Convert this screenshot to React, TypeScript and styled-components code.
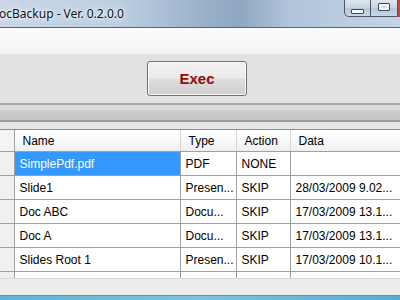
import styled, { createGlobalStyle } from 'styled-components';

const GlobalStyle = createGlobalStyle`
  html, body {
    margin: 0;
    padding: 0;
    background: #ffffff;
  }
`;

type Row = {
  name: string;
  type: string;
  action: string;
  data: string;
  selected?: boolean;
};

const rows: Row[] = [
  { name: 'SimplePdf.pdf', type: 'PDF', action: 'NONE', data: '', selected: true },
  { name: 'Slide1', type: 'Presen...', action: 'SKIP', data: '28/03/2009 9.02...' },
  { name: 'Doc ABC', type: 'Docu...', action: 'SKIP', data: '17/03/2009 13.1...' },
  { name: 'Doc A', type: 'Docu...', action: 'SKIP', data: '17/03/2009 13.1...' },
  { name: 'Slides Root 1', type: 'Presen...', action: 'SKIP', data: '17/03/2009 10.1...' },
  { name: '', type: '', action: '', data: '' },
];

const App = () => {
  return (
    <Window>
      <GlobalStyle />
      <TitleBar>
        <Title>ocBackup - Ver. 0.2.0.0</Title>
        <Controls>
          <CtrlButton>
            <MinGlyph />
          </CtrlButton>
          <CtrlButton>
            <MaxGlyph />
          </CtrlButton>
          <CloseEdge />
        </Controls>
      </TitleBar>
      <TopStrip />
      <ButtonPanel>
        <ExecButton>Exec</ExecButton>
      </ButtonPanel>
      <Splitter>
        <SplitBand $tone="light" />
        <SplitBand $tone="dark" />
        <SplitBand $tone="edge" />
      </Splitter>
      <GridArea>
        <Table>
          <colgroup>
            <col style={{ width: 14 }} />
            <col style={{ width: 166 }} />
            <col style={{ width: 56 }} />
            <col style={{ width: 54 }} />
            <col style={{ width: 120 }} />
          </colgroup>
          <thead>
            <tr>
              <HeadCell />
              <HeadCell>Name</HeadCell>
              <HeadCell>Type</HeadCell>
              <HeadCell>Action</HeadCell>
              <HeadCell>Data</HeadCell>
            </tr>
          </thead>
          <tbody>
            {rows.map((r, i) => (
              <tr key={i}>
                <RowHead />
                <Cell $selected={r.selected}>{r.name}</Cell>
                <Cell>{r.type}</Cell>
                <Cell>{r.action}</Cell>
                <Cell>{r.data}</Cell>
              </tr>
            ))}
          </tbody>
        </Table>
      </GridArea>
      <Footer />
      <BottomFrame />
    </Window>
  );
};

export default App;

const Window = styled.div`
  width: 400px;
  height: 300px;
  display: flex;
  flex-direction: column;
  overflow: hidden;
  font-family: 'Liberation Sans', Arial, sans-serif;
`;

const TitleBar = styled.div`
  height: 28px;
  flex-shrink: 0;
  display: flex;
  align-items: flex-start;
  justify-content: space-between;
  background: linear-gradient(
    90deg,
    #c9d7e6 0%,
    #bccfe2 30%,
    #98afc8 52%,
    #8ea7c1 60%,
    #b1c4da 72%,
    #c4d4e6 100%
  );
  border-bottom: 1px solid #56657a;
  box-sizing: border-box;
`;

const Title = styled.div`
  margin-left: -1px;
  margin-top: 5px;
  font-family: 'Noto Sans', 'DejaVu Sans', sans-serif;
  font-size: 12px;
  color: #111111;
  text-shadow: 0 0 6px #ffffff, 0 0 3px #ffffff;
`;

const Controls = styled.div`
  display: flex;
  height: 17px;
  margin-right: -1px;
`;

const CtrlButton = styled.div`
  width: 27px;
  height: 17px;
  display: flex;
  align-items: center;
  justify-content: center;
  box-sizing: border-box;
  border: 1px solid #4a5668;
  border-top: none;
  border-left-width: 0;
  background: linear-gradient(180deg, #dfe8f1 0%, #c6d4e3 50%, #b6c7d9 51%, #c9d7e6 100%);

  &:first-child {
    border-left-width: 1px;
    border-bottom-left-radius: 5px;
  }
`;

const MinGlyph = styled.div`
  width: 11px;
  height: 3px;
  margin-top: 6px;
  background: #f4f6f8;
  border: 1px solid #3d4a5c;
  border-radius: 1px;
`;

const MaxGlyph = styled.div`
  width: 10px;
  height: 6px;
  margin-top: -2px;
  background: #d4dde8;
  border: 1px solid #3d4a5c;
  box-shadow: inset 0 0 0 2px #f4f6f8;
  border-radius: 1px;
`;

const CloseEdge = styled.div`
  width: 3px;
  height: 17px;
  background: #c4453a;
`;

const TopStrip = styled.div`
  height: 26px;
  flex-shrink: 0;
  background: linear-gradient(180deg, #fbfbfb 0%, #f3f3f3 100%);
`;

const ButtonPanel = styled.div`
  height: 51px;
  flex-shrink: 0;
  background: #e2e2e2;
  display: flex;
  align-items: center;
  padding-left: 147px;
  box-sizing: border-box;
  border-bottom: 2px solid #a9a9a9;
`;

const ExecButton = styled.div`
  width: 100px;
  height: 35px;
  box-sizing: border-box;
  border: 1px solid #707070;
  border-radius: 3px;
  background: linear-gradient(180deg, #f2f2f2 0%, #ebebeb 48%, #dddddd 52%, #cfcfcf 100%);
  box-shadow: inset 0 0 0 1px #fbfbfb;
  display: flex;
  align-items: center;
  justify-content: center;
  font-family: 'Liberation Sans', Arial, sans-serif;
  font-weight: bold;
  font-size: 15px;
  color: #960808;
`;

const Splitter = styled.div`
  display: flex;
  flex-direction: column;
  flex-shrink: 0;
`;

const SplitBand = styled.div<{ $tone: 'light' | 'dark' | 'edge' }>`
  height: ${(p) => (p.$tone === 'light' ? 5 : p.$tone === 'dark' ? 10 : 7)}px;
  background: ${(p) =>
    p.$tone === 'light'
      ? '#dadada'
      : p.$tone === 'dark'
        ? 'linear-gradient(180deg, #cdcdcd 0%, #c4c4c4 100%)'
        : '#e6e6e6'};
  border-top: ${(p) => (p.$tone === 'edge' ? '2px solid #9d9d9d' : 'none')};
`;

const GridArea = styled.div`
  height: 148px;
  flex-shrink: 0;
  overflow: hidden;
  background: #ffffff;
  border-top: 1px solid #8e8e8e;
`;

const Table = styled.table`
  border-collapse: collapse;
  table-layout: fixed;
  width: 410px;
  font-size: 12px;
  color: #000000;
`;

const HeadCell = styled.th`
  height: 21px;
  padding: 0 0 0 8px;
  text-align: left;
  font-weight: normal;
  white-space: nowrap;
  overflow: hidden;
  background: linear-gradient(180deg, #ffffff 0%, #f7f8f9 55%, #eceef1 100%);
  border-right: 1px solid #d5d5d5;
  border-bottom: 1px solid #a0a0a0;

  &:first-child {
    padding: 0;
    background: #f4f4f4;
    border-right: 1px solid #a0a0a0;
  }
`;

const RowHead = styled.td`
  height: 23px;
  padding: 0;
  background: #f0f0f0;
  border-right: 1px solid #a0a0a0;
  border-bottom: 1px solid #a0a0a0;
`;

const Cell = styled.td<{ $selected?: boolean }>`
  height: 23px;
  padding: 0 0 0 5px;
  white-space: nowrap;
  overflow: hidden;
  border-right: 1px solid #a0a0a0;
  border-bottom: 1px solid #a0a0a0;
  background: ${(p) => (p.$selected ? '#3399ff' : '#ffffff')};
  color: ${(p) => (p.$selected ? '#ffffff' : '#000000')};
`;

const Footer = styled.div`
  height: 17px;
  flex-shrink: 0;
  background: #ececec;
  border-top: 1px solid #d8d8d8;
  box-sizing: border-box;
`;

const BottomFrame = styled.div`
  flex: 1;
  background: linear-gradient(90deg, #5fb3d6 0%, #7cc3dd 50%, #58acd2 100%);
  border-top: 1px solid #6f8ea6;
`;
